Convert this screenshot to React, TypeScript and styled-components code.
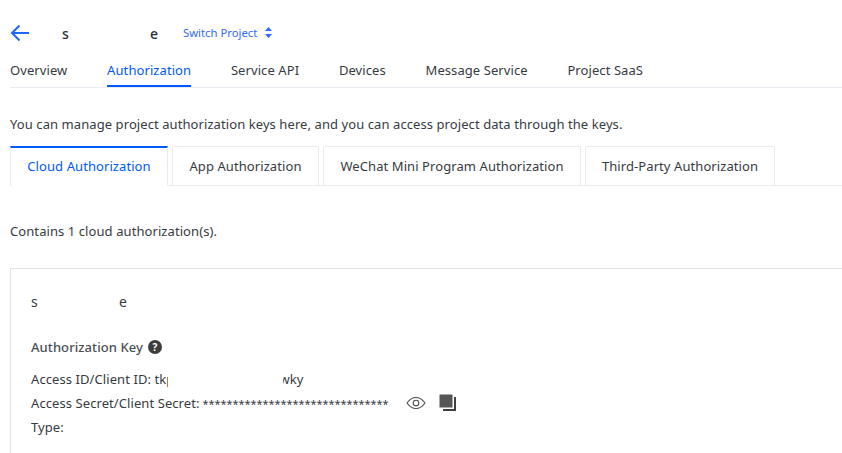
import React from "react";
import styled, { createGlobalStyle } from "styled-components";

const GlobalStyle = createGlobalStyle`
  html, body {
    margin: 0;
    padding: 0;
    background: #fff;
    overflow: hidden;
  }
  body {
    font-family: "Noto Sans", "Open Sans", sans-serif;
    font-size: 13px;
    letter-spacing: 0.08px;
    color: #363b42;
  }
`;

const Page = styled.div`
  width: 842px;
  height: 453px;
  overflow: hidden;
  padding: 0 0 0 10px;
  box-sizing: border-box;
`;

const Header = styled.div`
  display: flex;
  align-items: center;
  height: 34px;
  padding-top: 16px;
`;

const BackArrow = styled.svg`
  width: 20px;
  height: 18px;
  flex: none;
`;

const ProjectName = styled.div`
  display: flex;
  justify-content: space-between;
  width: 96px;
  margin-left: 32px;
  font-size: 14px;
  font-weight: 500;
  color: #2a2e33;
`;

const SwitchLink = styled.a`
  display: flex;
  align-items: center;
  gap: 8px;
  margin-left: 25px;
  margin-top: -2px;
  font-size: 11.3px;
  letter-spacing: 0;
  color: #2f6bff;
`;

const NavBar = styled.div`
  display: flex;
  gap: 39.75px;
  height: 37px;
  border-bottom: 1px solid #e9ebf2;
`;

const NavItem = styled.div<{ $active?: boolean }>`
  height: 35px;
  line-height: 41px;
  font-size: 13px;
  color: ${(p) => (p.$active ? "#0058ff" : "#363b42")};
  border-bottom: 2px solid ${(p) => (p.$active ? "#0058ff" : "transparent")};
`;

const Intro = styled.p`
  margin: 26px 0 0;
  height: 21px;
  line-height: 21px;
`;

const TabRow = styled.div`
  display: flex;
  gap: 4px;
  margin-top: 11px;
  height: 40px;
  box-sizing: border-box;
  border-bottom: 1px solid #e9ebf0;
`;

const Tab = styled.div<{ $active?: boolean; $width: number }>`
  width: ${(p) => p.$width}px;
  box-sizing: border-box;
  height: ${(p) => (p.$active ? "40px" : "39px")};
  text-align: center;
  line-height: ${(p) => (p.$active ? "36px" : "38px")};
  background: #fff;
  border: 1px solid #e9ebf0;
  border-top: ${(p) => (p.$active ? "2px solid #0058ff" : "1px solid #e9ebf0")};
  border-bottom: none;
  border-radius: ${(p) => (p.$active ? "0" : "2px 2px 0 0")};
  color: ${(p) => (p.$active ? "#0058ff" : "#363b42")};
`;

const Summary = styled.p`
  margin: 35px 0 0;
  height: 21px;
  line-height: 21px;
`;

const Card = styled.div`
  margin-top: 26px;
  width: 860px;
  height: 200px;
  box-sizing: border-box;
  padding: 22px 20px;
  border: 1px solid #e2e2e2;
`;

const CardName = styled.div`
  display: flex;
  justify-content: space-between;
  width: 96px;
  height: 21px;
  line-height: 21px;
  font-size: 14px;
`;

const SectionTitle = styled.div`
  display: flex;
  align-items: center;
  gap: 5px;
  margin-top: 24px;
  height: 21px;
  font-weight: 500;
  color: #4a4f55;
`;

const HelpBadge = styled.span`
  display: inline-flex;
  align-items: center;
  justify-content: center;
  width: 14px;
  height: 14px;
  border-radius: 50%;
  background: #3d3d3d;
  color: #fff;
  font-size: 10px;
  font-weight: 700;
  line-height: 1;
`;

const KeyList = styled.div`
  margin-top: 10px;
`;

const KeyRow = styled.div`
  display: flex;
  align-items: center;
  height: 24px;
  white-space: pre;
`;

const Clipped = styled.span<{ $width: number; $left: number; $fromEnd?: boolean }>`
  display: inline-block;
  overflow: hidden;
  width: ${(p) => p.$width}px;
  margin-left: ${(p) => p.$left}px;
  direction: ${(p) => (p.$fromEnd ? "rtl" : "ltr")};
`;

const Secret = styled.span`
  font-size: 10.9px;
  letter-spacing: 0;
  margin-left: 3px;
`;

const RowIcons = styled.span`
  display: inline-flex;
  align-items: center;
  gap: 13px;
  margin-left: 17px;
`;

export default function App() {
  return (
    <>
      <GlobalStyle />
      <Page>
        <Header>
          <BackArrow viewBox="0 0 20 18" fill="none" stroke="#1f66ff" strokeWidth="2">
            <path d="M19 9H2M9.500 1.500 2 9l7.500 7.500" />
          </BackArrow>
          <ProjectName>
            <span>s</span>
            <span>e</span>
          </ProjectName>
          <SwitchLink>
            Switch Project
            <svg width="7" height="11" viewBox="0 0 7 11" fill="#2f6bff">
              <path d="M3.500 0 7 4H0zM0 7h7l-3.500 4z" />
            </svg>
          </SwitchLink>
        </Header>
        <NavBar>
          <NavItem>Overview</NavItem>
          <NavItem $active>Authorization</NavItem>
          <NavItem>Service API</NavItem>
          <NavItem>Devices</NavItem>
          <NavItem>Message Service</NavItem>
          <NavItem>Project SaaS</NavItem>
        </NavBar>
        <Intro>You can manage project authorization keys here, and you can access project data through the keys.</Intro>
        <TabRow>
          <Tab $active $width={158}>Cloud Authorization</Tab>
          <Tab $width={147}>App Authorization</Tab>
          <Tab $width={258}>WeChat Mini Program Authorization</Tab>
          <Tab $width={190}>Third-Party Authorization</Tab>
        </TabRow>
        <Summary>Contains 1 cloud authorization(s).</Summary>
        <Card>
          <CardName>
            <span>s</span>
            <span>e</span>
          </CardName>
          <SectionTitle>
            Authorization Key
            <HelpBadge>?</HelpBadge>
          </SectionTitle>
          <KeyList>
            <KeyRow>
              Access ID/Client ID: <Clipped $width={13} $left={0}>tkp</Clipped>
              <Clipped $width={21} $left={115} $fromEnd>wky</Clipped>
            </KeyRow>
            <KeyRow>
              Access Secret/Client Secret:<Secret>*******************************</Secret>
              <RowIcons>
                <svg width="20" height="14" viewBox="0 0 20 14" fill="none" stroke="#4a4a4a" strokeWidth="1.1">
                  <path d="M1 7c2.500-3.600 5.500-5.500 9-5.500S16.500 3.400 19 7c-2.500 3.600-5.500 5.500-9 5.500S3.500 10.600 1 7z" />
                  <circle cx="10" cy="7" r="2.800" />
                </svg>
                <svg width="18" height="18" viewBox="0 0 18 18">
                  <rect x="0.500" y="0.500" width="13" height="13" fill="#565656" />
                  <path d="M15 3h2v14H4v-2h11z" fill="#3f3f3f" />
                </svg>
              </RowIcons>
            </KeyRow>
            <KeyRow>Type:</KeyRow>
          </KeyList>
        </Card>
      </Page>
    </>
  );
}
